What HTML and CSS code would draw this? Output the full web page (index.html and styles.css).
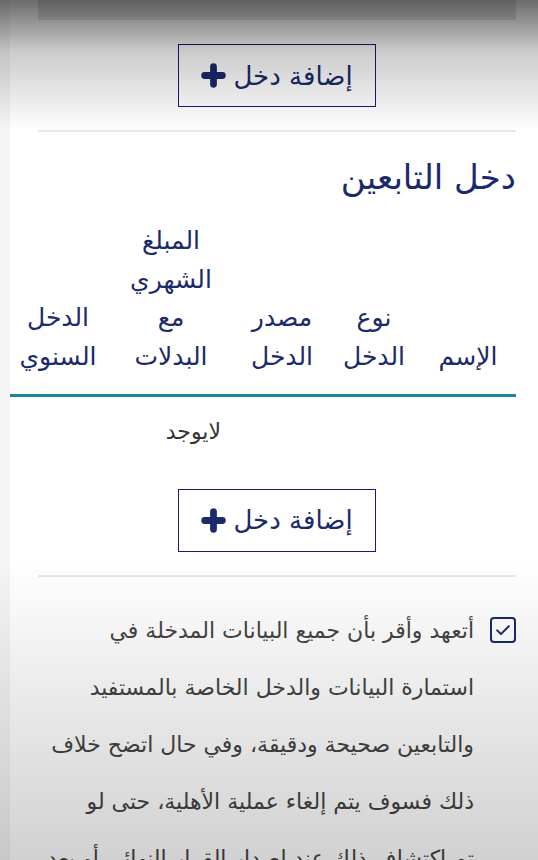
FILE: index.html
```html
<!DOCTYPE html>
<html lang="ar" dir="rtl">
<head>
  <meta charset="UTF-8" />
  <meta name="viewport" content="width=device-width, initial-scale=1" />
  <title>دخل التابعين</title>
  <link rel="stylesheet" href="styles.css">
</head>
<body>

  <div class="card">
    <div class="prev-block"></div>

    <div class="btn-row">
      <button class="add-btn" type="button">
        إضافة دخل
        <svg class="plus" viewBox="0 0 24 24" width="25" height="25"><path d="M12 3.5v17M3.5 12h17" /></svg>
      </button>
    </div>

    <hr class="sep" />

    <h2 class="section-title">دخل التابعين</h2>

    <div class="table-wrap">
      <table class="income-table">
        <thead>
          <tr>
            <th class="c-name">الإسم</th>
            <th class="c-type">نوع<br>الدخل</th>
            <th class="c-src">مصدر<br>الدخل</th>
            <th class="c-month">المبلغ<br>الشهري<br>مع<br>البدلات</th>
            <th class="c-year">الدخل<br>السنوي</th>
          </tr>
        </thead>
        <tbody>
          <tr>
            <td></td>
            <td></td>
            <td></td>
            <td class="empty">لايوجد</td>
            <td></td>
          </tr>
        </tbody>
      </table>
    </div>

    <div class="btn-row btn-row-lower">
      <button class="add-btn" type="button">
        إضافة دخل
        <svg class="plus" viewBox="0 0 24 24" width="25" height="25"><path d="M12 3.5v17M3.5 12h17" /></svg>
      </button>
    </div>

    <hr class="sep" />

    <label class="pledge">
      <span class="checkbox">
        <svg viewBox="0 0 24 24" width="20" height="20"><path d="M5 12.5l4.5 4.5L19 7.5" /></svg>
      </span>
      <span class="pledge-text">أتعهد وأقر بأن جميع البيانات المدخلة في استمارة البيانات والدخل الخاصة بالمستفيد والتابعين صحيحة ودقيقة، وفي حال اتضح خلاف ذلك فسوف يتم إلغاء عملية الأهلية، حتى لو تم&nbsp;اكتشاف ذلك عند إصدار القرار النهائي أو بعد صرف الدعم.</span>
    </label>
  </div>

  <div class="shade-top"></div>
  <div class="shade-bottom"></div>

</body>
</html>
```

FILE: styles.css
```css
body {
  margin: 0;
  background: #f5f5f5;
  font-family: "DejaVu Sans", "Noto Sans", sans-serif;
  color: #1b2a6b;
  direction: rtl;
  overflow: hidden;
  height: 860px;
}

.card {
  background: #fff;
  margin-left: 10px;
  padding: 0 22px 0 28px;
  min-height: 860px;
}

.prev-block {
  height: 20px;
  background: #e2e2e2;
}

.btn-row {
  display: flex;
  justify-content: center;
  padding-top: 24px;
}

.btn-row-lower {
  padding-top: 40px;
}

.add-btn {
  width: 198px;
  height: 63px;
  background: #fff;
  border: 1.5px solid #1a1a7a;
  color: #1b2a6b;
  font-family: inherit;
  font-size: 26px;
  display: flex;
  align-items: center;
  justify-content: center;
  gap: 7px;
  padding: 0;
  cursor: pointer;
}

.plus {
  stroke: #1b2a6b;
  stroke-width: 6.5;
  stroke-linecap: round;
  fill: none;
}

.sep {
  border: none;
  border-top: 2px solid #e8e8e8;
  margin: 23px 0 0;
}

.section-title {
  margin: 20px 0 0;
  font-size: 34px;
  font-weight: normal;
  color: #1b2a6b;
  line-height: 50px;
}

.table-wrap {
  margin-left: -28px;
  margin-top: 20px;
}

.income-table {
  width: 100%;
  border-collapse: collapse;
}

.income-table th {
  font-weight: normal;
  font-size: 25px;
  line-height: 38.7px;
  color: #1b2a6b;
  vertical-align: bottom;
  text-align: center;
  padding: 0 0 17px;
  border-bottom: 3px solid #1a86a3;
}

.c-name { width: 96px; }
.c-type { width: 92px; }
.c-src { width: 92px; }
.c-month { width: 130px; }

.income-table td {
  padding: 18px 0 0;
  font-size: 22px;
  line-height: 34px;
  color: #333;
  text-align: center;
}

.income-table td.empty {
  text-align: right;
  padding-right: 15px;
}

.pledge {
  display: flex;
  align-items: flex-start;
  gap: 16px;
  margin-top: 40px;
}

.checkbox {
  flex: 0 0 auto;
  width: 22px;
  height: 22px;
  border: 2px solid #1b2a6b;
  border-radius: 4px;
  display: flex;
  align-items: center;
  justify-content: center;
}

.checkbox svg {
  stroke: #1b2a6b;
  stroke-width: 2.4;
  fill: none;
  stroke-linecap: round;
  stroke-linejoin: round;
}

.pledge-text {
  font-size: 22px;
  line-height: 57px;
  color: #444;
  margin-top: -15px;
}

.shade-top {
  position: fixed;
  top: 0;
  left: 0;
  right: 0;
  height: 130px;
  background: linear-gradient(to bottom, rgba(0, 0, 0, 0.58), rgba(0, 0, 0, 0.2) 40%, rgba(0, 0, 0, 0));
  pointer-events: none;
}

.shade-bottom {
  position: fixed;
  bottom: 0;
  left: 0;
  right: 0;
  height: 300px;
  background: linear-gradient(to bottom, rgba(0, 0, 0, 0), rgba(0, 0, 0, 0.18));
  pointer-events: none;
}
```
